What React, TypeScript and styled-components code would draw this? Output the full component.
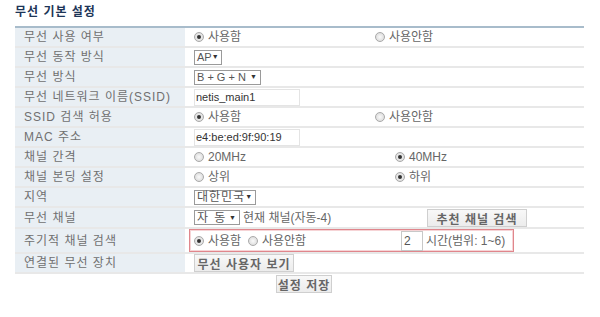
import React from 'react';
import styled, { createGlobalStyle } from 'styled-components';

const GlobalStyle = createGlobalStyle`
  body {
    margin: 0;
    background: #fff;
    font-family: "Liberation Sans", "Noto Sans CJK KR", sans-serif;
    font-size: 12px;
    color: #666;
  }
`;

const Page = styled.div`
  width: 600px;
  padding: 5px 16px 0 15px;
  box-sizing: border-box;
`;

const Title = styled.h3`
  margin: 0 0 6px;
  height: 15px;
  line-height: 15px;
  font-size: 12px;
  font-weight: bold;
  color: #1d3557;
  letter-spacing: 1px;
`;

const Table = styled.div`
  border-top: 2px solid #a8bccb;
`;

const Row = styled.div<{ $h?: number }>`
  display: grid;
  grid-template-columns: 170px 1fr;
  height: ${p => p.$h ?? 18}px;
  line-height: 14px;
  border-bottom: 2px solid #e8e8e8;
`;

const Label = styled.div`
  background: #e9eff4;
  color: #707070;
  padding-left: 9px;
  display: flex;
  align-items: center;
  letter-spacing: 1px;
`;

const Value = styled.div<{ $boxed?: boolean }>`
  display: flex;
  align-items: center;
  padding-left: ${p => (p.$boxed ? 4 : 9)}px;
  ${p =>
    p.$boxed &&
    `
    margin: 0 70px 0 4px;
    border: 1px solid #e0868c;
    box-shadow: inset 0 0 0 1px #f6d4d6;
  `}
`;

const Cell = styled.div<{ $w?: number }>`
  display: flex;
  align-items: center;
  gap: 3px;
  white-space: nowrap;
  ${p => (p.$w ? `width: ${p.$w}px; flex: none;` : '')}
`;

const Dot = styled.span<{ $on?: boolean }>`
  width: 10px;
  height: 10px;
  border-radius: 50%;
  box-sizing: border-box;
  border: 1px solid #a9a9a9;
  background: radial-gradient(circle, #fafafa 0%, #d4d4d4 100%);
  position: relative;
  margin-right: 1px;
  &::after {
    content: '';
    display: ${p => (p.$on ? 'block' : 'none')};
    position: absolute;
    left: 2px;
    top: 2px;
    width: 4px;
    height: 4px;
    border-radius: 50%;
    background: #333;
  }
`;

const Radio: React.FC<{ on?: boolean; children: React.ReactNode }> = ({ on, children }) => (
  <Cell>
    <Dot $on={on} />
    <span>{children}</span>
  </Cell>
);

const Select = styled.span<{ $w: number; $fs?: number; $ls?: number }>`
  width: ${p => p.$w}px;
  height: 15px;
  box-sizing: border-box;
  border: 1px solid #9a9a9a;
  background: #fff;
  color: #555;
  font-size: ${p => p.$fs ?? 11}px;
  letter-spacing: ${p => p.$ls ?? 0}px;
  white-space: nowrap;
  display: inline-flex;
  align-items: center;
  justify-content: space-between;
  padding: 0 3px 0 2px;
  flex: none;
  &::after {
    content: '▼';
    font-size: 7px;
    letter-spacing: 0;
    color: #333;
  }
`;

const TextInput = styled.span<{ $w: number }>`
  width: ${p => p.$w}px;
  height: 17px;
  box-sizing: border-box;
  border: 1px solid #e4e4e4;
  display: inline-flex;
  align-items: center;
  padding-left: 1px;
  color: #333;
  font-size: 11px;
  flex: none;
`;

const SmallInput = styled(TextInput)`
  height: 20px;
  border: 1px solid #c8c8c8;
  padding-left: 2px;
  font-size: 12px;
  color: #555;
`;

const Button = styled.button<{ $w: number }>`
  width: ${p => p.$w}px;
  height: 18px;
  padding: 0;
  border: 1px solid #cfcfcf;
  background: linear-gradient(#f8f8f8, #ececec);
  color: #666;
  font-family: inherit;
  font-size: 12px;
  font-weight: bold;
  letter-spacing: 1px;
  flex: none;
`;

const Footer = styled.div`
  display: flex;
  justify-content: center;
  padding: 1px 0 0 9px;
`;

export default function App() {
  return (
    <>
      <GlobalStyle />
      <Page>
        <Title>무선 기본 설정</Title>
        <Table>
          <Row>
            <Label>무선 사용 여부</Label>
            <Value>
              <Cell $w={181}><Radio on>사용함</Radio></Cell>
              <Radio>사용안함</Radio>
            </Value>
          </Row>
          <Row>
            <Label>무선 동작 방식</Label>
            <Value><Select $w={28}>AP</Select></Value>
          </Row>
          <Row>
            <Label>무선 방식</Label>
            <Value><Select $w={67}>B + G + N</Select></Value>
          </Row>
          <Row>
            <Label>무선 네트워크 이름(SSID)</Label>
            <Value><TextInput $w={106}>netis_main1</TextInput></Value>
          </Row>
          <Row>
            <Label>SSID 검색 허용</Label>
            <Value>
              <Cell $w={181}><Radio on>사용함</Radio></Cell>
              <Radio>사용안함</Radio>
            </Value>
          </Row>
          <Row>
            <Label>MAC 주소</Label>
            <Value><TextInput $w={106}>e4:be:ed:9f:90:19</TextInput></Value>
          </Row>
          <Row>
            <Label>채널 간격</Label>
            <Value>
              <Cell $w={201}><Radio>20MHz</Radio></Cell>
              <Radio on>40MHz</Radio>
            </Value>
          </Row>
          <Row>
            <Label>채널 본딩 설정</Label>
            <Value>
              <Cell $w={201}><Radio>상위</Radio></Cell>
              <Radio on>하위</Radio>
            </Value>
          </Row>
          <Row>
            <Label>지역</Label>
            <Value><Select $w={62} $fs={12} $ls={1}>대한민국</Select></Value>
          </Row>
          <Row $h={19}>
            <Label>무선 채널</Label>
            <Value>
              <Cell $w={233}>
                <Select $w={46} $fs={12} $ls={1.5}>자 동</Select>
                <span>현재 채널(자동-4)</span>
              </Cell>
              <Button $w={100}>추천 채널 검색</Button>
            </Value>
          </Row>
          <Row $h={23}>
            <Label>주기적 채널 검색</Label>
            <Value $boxed>
              <Cell $w={54}><Radio on>사용함</Radio></Cell>
              <Cell $w={153}><Radio>사용안함</Radio></Cell>
              <Cell>
                <SmallInput $w={22}>2</SmallInput>
                <span>시간(범위: 1~6)</span>
              </Cell>
            </Value>
          </Row>
          <Row>
            <Label>연결된 무선 장치</Label>
            <Value><Button $w={100}>무선 사용자 보기</Button></Value>
          </Row>
        </Table>
        <Footer>
          <Button $w={56}>설정 저장</Button>
        </Footer>
      </Page>
    </>
  );
}
